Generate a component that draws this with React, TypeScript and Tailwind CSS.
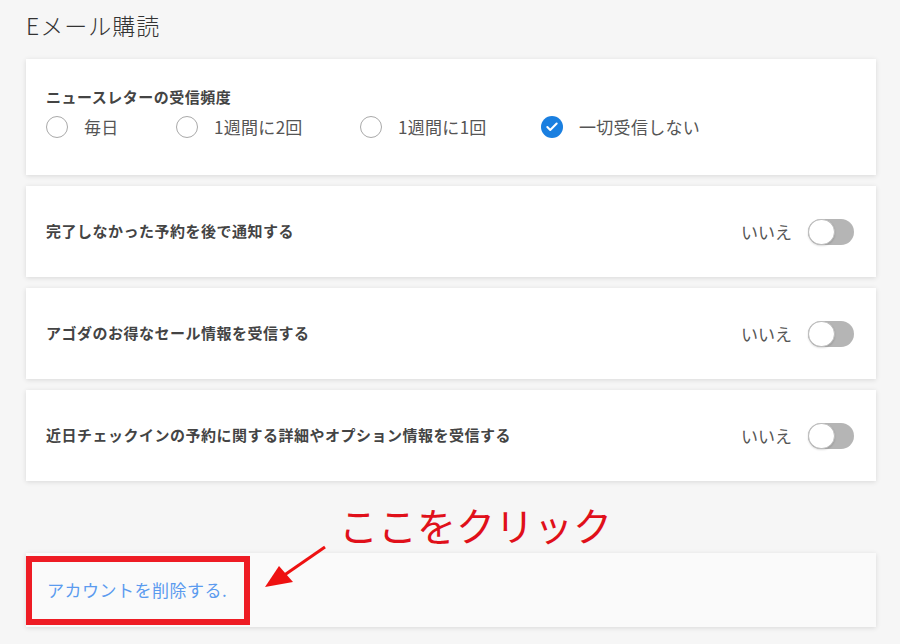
import { Check } from "lucide-react";

const freqs = [
  { label: "毎日", w: "w-[130px]" },
  { label: "1週間に2回", w: "w-[184px]" },
  { label: "1週間に1回", w: "w-[181px]" },
  { label: "一切受信しない", w: "" },
];

const prefs = [
  "完了しなかった予約を後で通知する",
  "アゴダのお得なセール情報を受信する",
  "近日チェックインの予約に関する詳細やオプション情報を受信する",
];

const Toggle = () => (
  <div className="relative h-[26px] w-[46px] rounded-full bg-[#b5b5b5]">
    <div className="absolute left-0 top-0 h-[26px] w-[27px] rounded-full border border-[#bdbdbd] bg-white shadow-[0_1px_2px_rgba(0,0,0,0.15)]" />
  </div>
);

const Radio = ({ checked }: { checked?: boolean }) =>
  checked ? (
    <span className="flex h-[22px] w-[22px] items-center justify-center rounded-full bg-[#1a7fe0]">
      <Check className="h-[14px] w-[14px] text-white" strokeWidth={3.5} />
    </span>
  ) : (
    <span className="h-[22px] w-[22px] rounded-full border-[1.5px] border-[#a9a9a9] bg-white" />
  );

export default function App() {
  return (
    <div
      className="relative h-[644px] w-[900px] overflow-hidden bg-[#f6f6f6] px-[26px] pt-[10px] text-[#333]"
      style={{ fontFamily: '"Noto Sans CJK JP", "Noto Sans", sans-serif' }}
    >
      <h1 className="h-[30px] text-[23px] leading-[30px] font-light tracking-[1px] text-[#333]">Eメール購読</h1>

      <div className="mt-[19px] flex w-[850px] flex-col gap-[11px]">
        <div className="h-[116px] bg-white px-[20px] pt-[28px] shadow-[0_1px_5px_rgba(0,0,0,0.12)]">
          <p className="text-[15px] leading-[20px] font-bold tracking-[0.5px] text-[#444]">ニュースレターの受信頻度</p>
          <div className="mt-[9px] flex items-center">
            {freqs.map((f, i) => (
              <div key={f.label} className={`flex items-center gap-[16px] ${f.w}`}>
                <Radio checked={i === 3} />
                <span className="text-[17px] leading-[22px] tracking-[0.3px] text-[#555]">{f.label}</span>
              </div>
            ))}
          </div>
        </div>

        {prefs.map((p) => (
          <div
            key={p}
            className="flex h-[91px] items-center justify-between bg-white pl-[20px] pr-[22px] shadow-[0_1px_5px_rgba(0,0,0,0.12)]"
          >
            <p className="text-[15px] font-bold tracking-[0.5px] text-[#444]">{p}</p>
            <div className="flex items-center gap-[16px]">
              <span className="text-[17px] text-[#555]">いいえ</span>
              <Toggle />
            </div>
          </div>
        ))}
      </div>

      <div className="mt-[72px] flex h-[74px] w-[850px] items-center bg-[#fafafa] pl-[21px] shadow-[0_1px_5px_rgba(0,0,0,0.12)]">
        <a className="text-[17px] tracking-[0.5px] text-[#5b9bef]">アカウントを削除する.</a>
      </div>

      {/* annotation */}
      <div className="absolute left-[26px] top-[556px] h-[69px] w-[224px] border-[6px] border-[#ee1c24]" />
      <p className="absolute left-[339px] top-[499px] text-[39px] leading-[50px] text-[#e0101a]">ここをクリック</p>
      <svg className="absolute left-[255px] top-[540px]" width="80" height="56" viewBox="0 0 80 56">
        <line x1="70" y1="7" x2="28" y2="36" stroke="#ee1111" strokeWidth="3" />
        <polygon points="10,47 24,26 38,42" fill="#ee1111" />
      </svg>
    </div>
  );
}
